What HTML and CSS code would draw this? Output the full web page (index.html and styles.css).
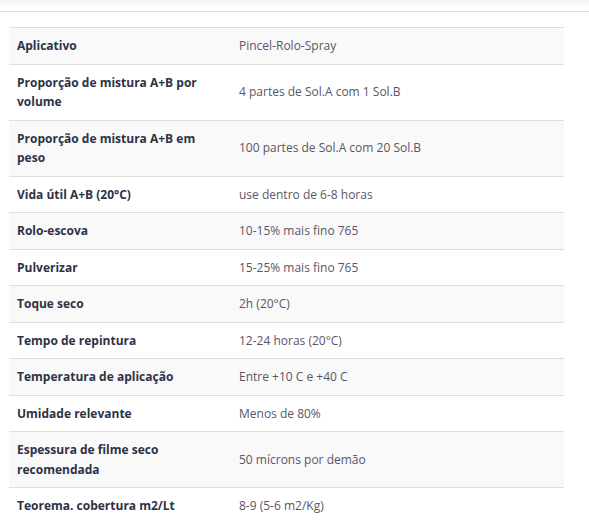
FILE: index.html
```html
<!DOCTYPE html>
<html lang="pt">
<head>
<meta charset="utf-8">
<title>Especificações</title>
<link rel="stylesheet" href="styles.css">
</head>
<body>
<div class="topband"></div>
<div class="panel">
  <table class="spec">
    <tbody>
      <tr><th>Aplicativo</th><td>Pincel-Rolo-Spray</td></tr>
      <tr><th>Proporção de mistura A+B por volume</th><td>4 partes de Sol.A com 1 Sol.B</td></tr>
      <tr><th>Proporção de mistura A+B em peso</th><td>100 partes de Sol.A com 20 Sol.B</td></tr>
      <tr><th>Vida útil A+B (20°C)</th><td>use dentro de 6-8 horas</td></tr>
      <tr><th>Rolo-escova</th><td>10-15% mais fino 765</td></tr>
      <tr><th>Pulverizar</th><td>15-25% mais fino 765</td></tr>
      <tr><th>Toque seco</th><td>2h (20°C)</td></tr>
      <tr><th>Tempo de repintura</th><td>12-24 horas (20°C)</td></tr>
      <tr><th>Temperatura de aplicação</th><td>Entre +10 C e +40 C</td></tr>
      <tr><th>Umidade relevante</th><td>Menos de 80%</td></tr>
      <tr><th>Espessura de filme seco recomendada</th><td>50 mícrons por demão</td></tr>
      <tr><th>Teorema. cobertura m2/Lt</th><td>8-9 (5-6 m2/Kg)</td></tr>
    </tbody>
  </table>
</div>
</body>
</html>
```
FILE: styles.css
```css
html, body {
  margin: 0;
  padding: 0;
  background: #fff;
}
body {
  font-family: "Open Sans", "Noto Sans", sans-serif;
  font-size: 12px;
  line-height: 19.5px;
  color: #555;
  overflow: hidden;
}
.topband {
  height: 11px;
  background: linear-gradient(#f3f3f3, #fcfcfc 45%, #fff);
}
.panel {
  margin-left: -7px;
  width: 571px;
  border: 1px solid #ddd;
  padding: 15px;
}
.spec {
  width: 555px;
  border-collapse: collapse;
  border-spacing: 0;
}
.spec th, .spec td {
  padding: 8px;
  border-top: 1px solid #ddd;
  vertical-align: middle;
  text-align: left;
}
.spec th {
  width: 206px;
  font-weight: 700;
  color: #2d3246;
}
.spec td {
  color: #585668;
}
.spec tr:nth-child(odd) {
  background: #f9f9f9;
}
```
